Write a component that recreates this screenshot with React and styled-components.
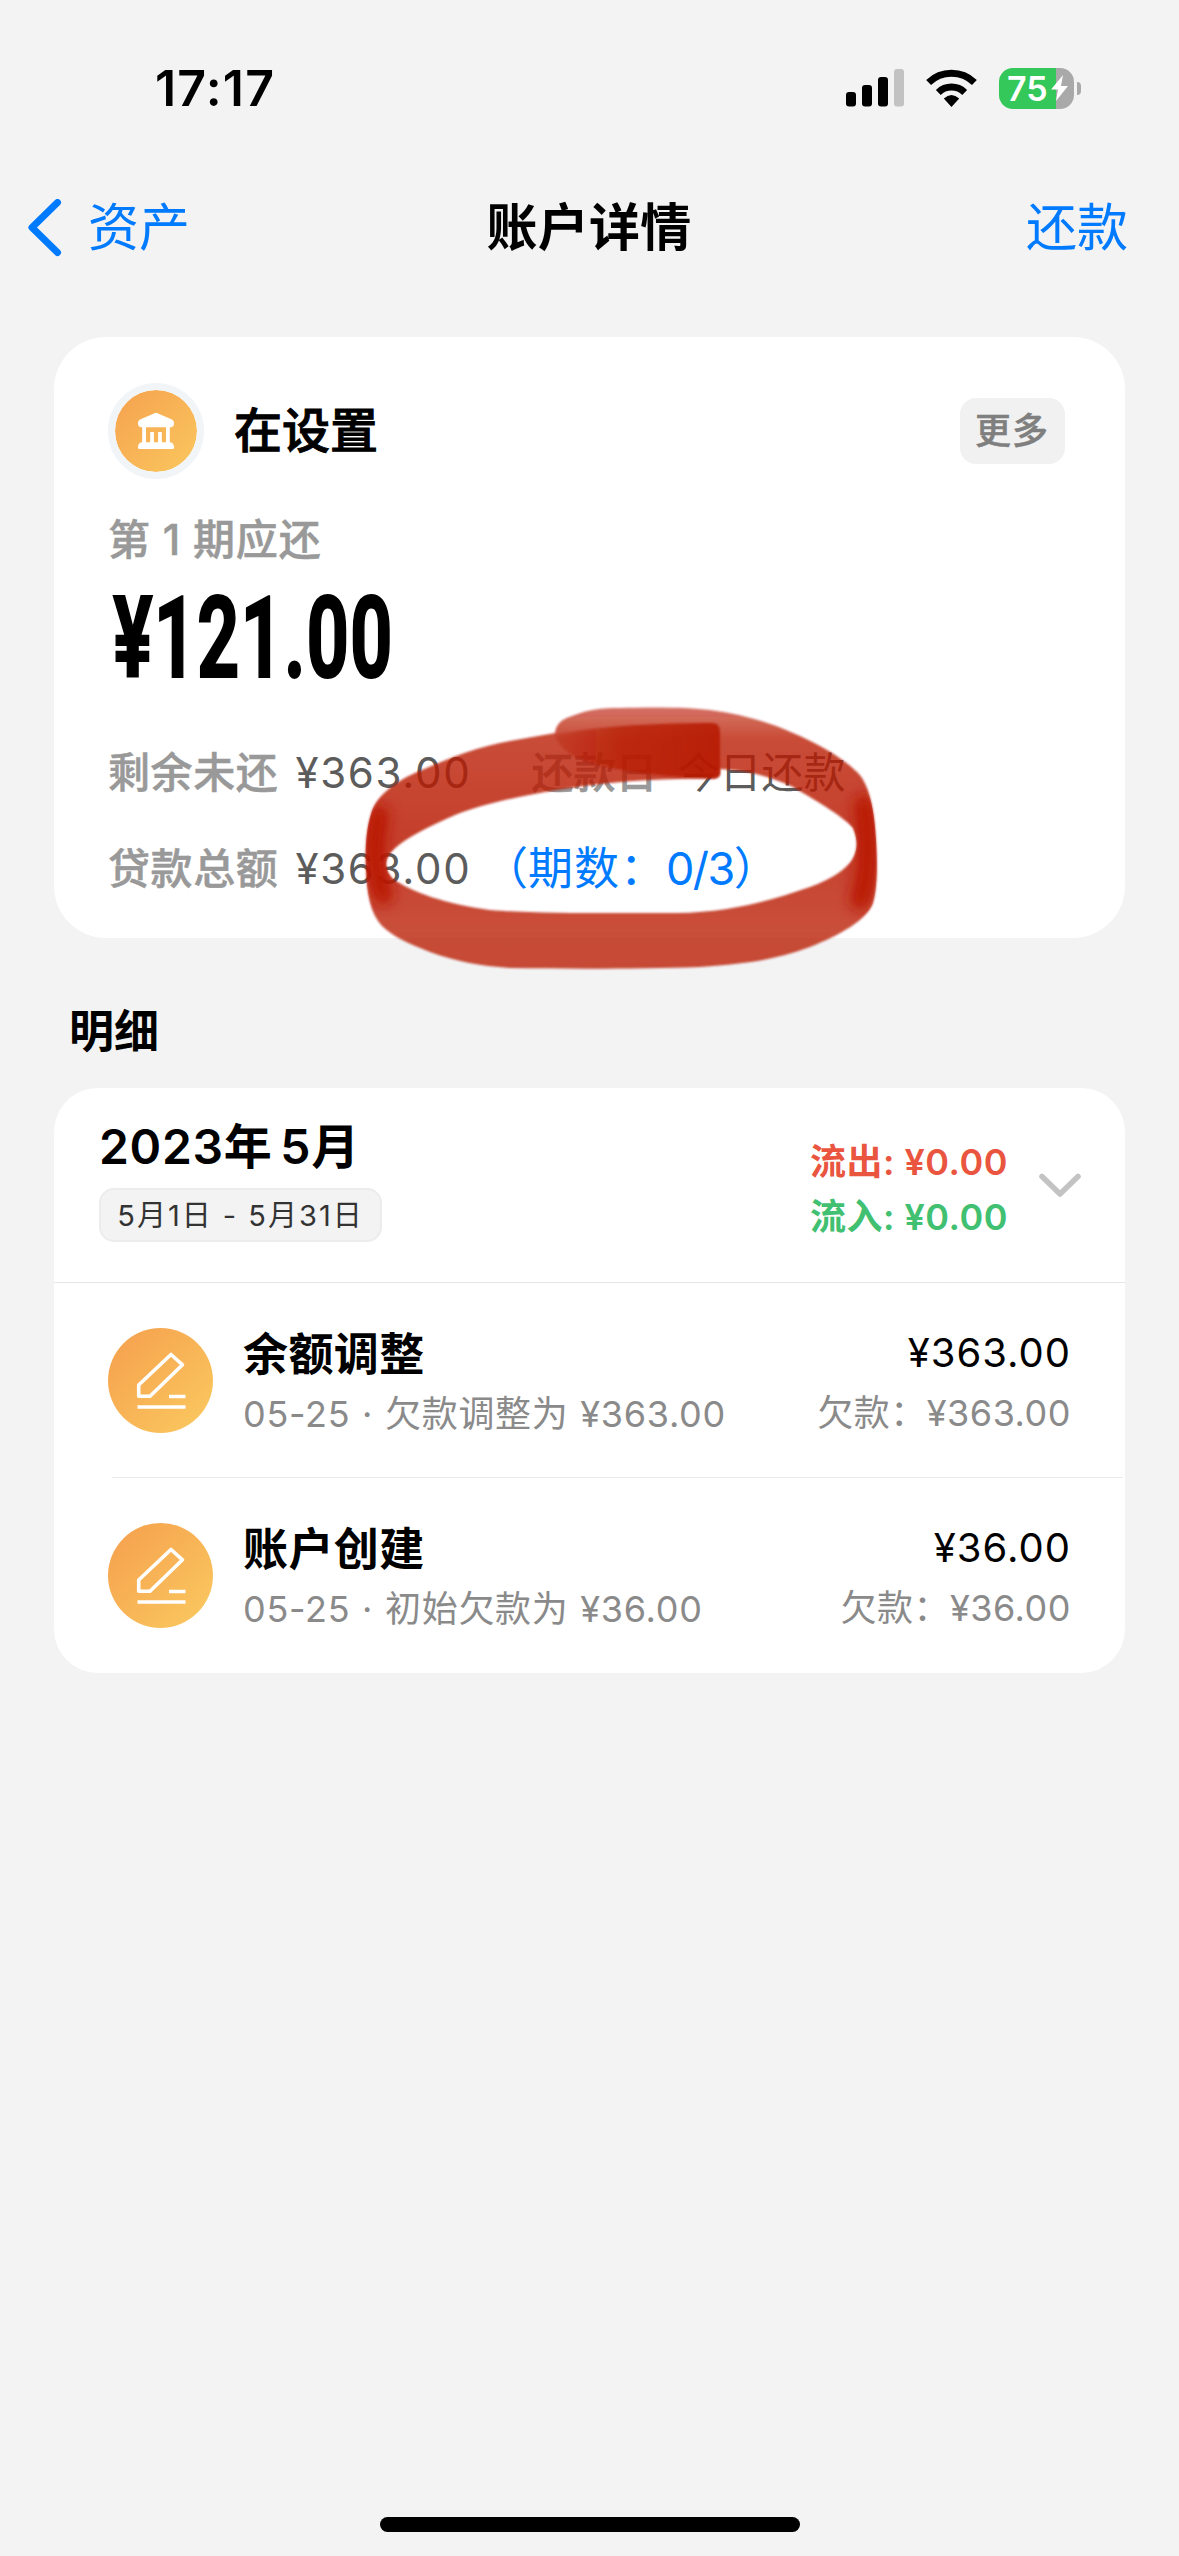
import React from "react";
import styled, { createGlobalStyle } from "styled-components";

const GlobalStyle = createGlobalStyle`
  * {
    box-sizing: border-box;
  }
  body {
    margin: 0;
    background-color: #f3f3f3;
    font-family: Inter, "Noto Sans CJK SC", sans-serif;
    color: #000;
  }
`;

const Screen = styled.div`
  width: 1179px;
  height: 2556px;
  position: relative;
  display: flex;
  flex-direction: column;
  overflow: hidden;
  white-space: nowrap;
`;

const StatusBar = styled.div`
  height: 176px;
  padding: 0 98px 0 155px;
  display: flex;
  align-items: center;
  justify-content: space-between;
`;

const Clock = styled.span`
  font-size: 50px;
  font-weight: 600;
  letter-spacing: 1.2px;
`;

const StatusIcons = styled.div`
  display: flex;
  align-items: center;
`;

const SignalIcon = styled.svg`
  margin-right: 22px;
`;

const WifiIcon = styled.svg`
  margin-right: 22px;
`;

const Battery = styled.div`
  width: 75px;
  height: 41px;
  border-radius: 14px;
  padding: 0 6px 0 8px;
  display: flex;
  align-items: center;
  justify-content: space-between;
  background: linear-gradient(to right, #34c759 57px, #a9a9a9 57px);
  color: #fff;
  font-size: 34px;
  font-weight: 600;
`;

const BatteryTip = styled.div`
  width: 4px;
  height: 13px;
  margin-left: 3px;
  border-radius: 0 5px 5px 0;
  background-color: #a9a9a9;
`;

const NavBar = styled.div`
  height: 101px;
  padding: 2px 51px 0 27px;
  display: grid;
  grid-template-columns: 1fr auto 1fr;
  align-items: center;
  font-size: 51px;
  line-height: 60px;
`;

const NavLink = styled.a`
  display: flex;
  align-items: center;
  gap: 26px;
  color: #007aff;
  justify-self: ${(props) => props.$side};
`;

const NavTitle = styled.h1`
  margin: 0 0 0 23px;
  font-size: 51px;
  font-weight: 600;
  letter-spacing: 0.3px;
`;

const Card = styled.section`
  margin: 0 54px;
  background-color: #fff;
  border-radius: ${(props) => props.$radius}px;
`;

const AccountCard = styled(Card)`
  height: 601px;
  margin-top: 60px;
  padding: 46px 60px 0 54px;
`;

const AccountHeader = styled.div`
  height: 96px;
  display: flex;
  align-items: center;
`;

const Circle = styled.div`
  flex: none;
  width: ${(props) => props.$size}px;
  height: ${(props) => props.$size}px;
  border: ${(props) => props.$ring || 0}px solid #f2f5f8;
  border-radius: 50%;
  display: flex;
  align-items: center;
  justify-content: center;
  background: linear-gradient(135deg, #f6a550 15%, #fac65e 90%) border-box;
  background-clip: ${(props) => (props.$ring ? "padding-box" : "border-box")};
`;

const AccountName = styled.h2`
  flex: 1;
  margin: 0 0 0 30px;
  font-size: 48px;
  line-height: 60px;
  font-weight: 500;
  -webkit-text-stroke: 1px currentColor;
`;

const MoreButton = styled.button`
  width: 105px;
  height: 66px;
  border: 0;
  border-radius: 16px;
  padding: 0 1px 1px 0;
  background-color: #f1f1f1;
  color: #7f7f7f;
  font-family: inherit;
  font-size: 36px;
  line-height: 60px;
  font-weight: 500;
  letter-spacing: 1px;
  -webkit-text-stroke: 0.5px currentColor;
`;

const PeriodLabel = styled.p`
  margin: 31px 0 0;
  font-size: 42px;
  line-height: 60px;
  font-weight: 500;
  letter-spacing: 0.8px;
  color: #999;
  -webkit-text-stroke: 0.5px currentColor;
`;

const DueAmount = styled.p`
  width: max-content;
  margin: 14px 0 0 5px;
  font-family: Roboto, sans-serif;
  font-size: 113px;
  line-height: 110px;
  font-weight: 700;
  letter-spacing: 1.5px;
  transform: scaleX(0.655);
  transform-origin: left center;
  -webkit-text-stroke: 2px #000;
`;

const Facts = styled.div`
  margin-top: 49px;
  display: grid;
  gap: 36px;
`;

const FactRow = styled.div`
  display: flex;
  align-items: center;
  height: 60px;
  line-height: 60px;
  font-size: 42px;
`;

const FactLabel = styled.span`
  color: #999;
  font-weight: 500;
  letter-spacing: ${(props) => props.$spacing || 0}px;
  margin-left: ${(props) => props.$gap || 0}px;
  -webkit-text-stroke: 0.5px currentColor;
`;

const FactValue = styled.span`
  color: #5c5c5c;
  letter-spacing: ${(props) => props.$spacing || 0}px;
  margin-left: ${(props) => props.$gap}px;
`;

const Terms = styled.span`
  font-size: 45px;
  letter-spacing: 1px;
  color: #007aff;
  margin-left: 34px;
`;

const Paren = styled.span`
  letter-spacing: 0;
  font-feature-settings: "halt";
`;

const Count = styled.span`
  letter-spacing: -1.5px;
`;

const SectionTitle = styled.h3`
  margin: 64px 0 26px 69px;
  font-size: 45px;
  line-height: 60px;
  font-weight: 600;
`;

const MonthHeader = styled.div`
  height: 195px;
  padding: 29px 43px 0 45px;
  display: flex;
  align-items: flex-start;
  border-bottom: 1px solid #e6e6e6;
`;

const MonthTitle = styled.div`
  font-size: 48px;
  line-height: 60px;
  font-weight: 600;
  letter-spacing: 0.7px;
  word-spacing: -5px;
`;

const MonthInfo = styled.div`
  flex: 1;
`;

const DateRange = styled.div`
  width: 283px;
  height: 54px;
  margin-top: 11px;
  border: 2px solid #ececec;
  border-radius: 15px;
  background-color: #f3f3f3;
  color: #333;
  font-size: 29px;
  line-height: 52px;
  letter-spacing: 2px;
  text-align: center;
`;

const Flows = styled.div`
  margin: 18px 30px 0 0;
`;

const Flow = styled.div`
  font-size: 36px;
  line-height: 55px;
  font-weight: 600;
  letter-spacing: 0.5px;
  color: ${(props) => props.$color};
`;

const ChevronDown = styled.svg`
  margin-top: 55px;
`;

const Entry = styled.div`
  height: 195px;
  padding: 41px 54px 0 54px;
  display: flex;
  align-items: flex-start;
`;

const EntryDivider = styled.div`
  height: 1px;
  margin: -1px 2px 0 58px;
  background-color: #ebebeb;
`;

const EntryIcon = styled(Circle)`
  margin-top: 4px;
`;

const EntryText = styled.div`
  flex: 1;
  margin: 1px 0 0 30px;
`;

const EntryTitle = styled.div`
  font-size: 45px;
  line-height: 60px;
  font-weight: 600;
  letter-spacing: 0.4px;
`;

const EntryAmount = styled.div`
  font-size: 40px;
  line-height: 57px;
  letter-spacing: 1px;
  text-align: right;
`;

const EntryNote = styled.div`
  font-size: 36px;
  line-height: ${(props) => props.$line}px;
  letter-spacing: ${(props) => props.$spacing}px;
  word-spacing: 1px;
  text-align: ${(props) => props.$align || "left"};
  color: #8a8a8a;
`;

const Marker = styled.svg`
  position: absolute;
  left: 350px;
  top: 690px;
  pointer-events: none;
`;

const HomeIndicator = styled.div`
  width: 420px;
  height: 15px;
  margin: auto auto 24px;
  border-radius: 8px;
  background-color: #000;
`;

const entries = [
  {
    title: "余额调整",
    note: "05-25 · 欠款调整为 ¥363.00",
    amount: "¥363.00",
  },
  {
    title: "账户创建",
    note: "05-25 · 初始欠款为 ¥36.00",
    amount: "¥36.00",
  },
];

function Signal() {
  return (
    <SignalIcon width="58" height="38" viewBox="0 0 58 38">
      <rect x="0" y="23" width="10" height="14.5" rx="3" />
      <rect x="16" y="16" width="10" height="21.5" rx="3" />
      <rect x="32" y="8" width="10" height="29.5" rx="3" />
      <rect x="48" y="0" width="10" height="37.5" rx="3" fill="#c2c2c2" />
    </SignalIcon>
  );
}

function Wifi() {
  return (
    <WifiIcon width="51" height="38" viewBox="0 0 51 38">
      <path d="M25.5 38 L17.8 29.6 Q25.5 22.6 33.2 29.6 Z" />
      <path d="M12.3 23.4 A19 19 0 0 1 38.7 23.4" fill="none" stroke="#000" strokeWidth="7" />
      <path d="M2.6 13.4 A33 33 0 0 1 48.4 13.4" fill="none" stroke="#000" strokeWidth="7" />
    </WifiIcon>
  );
}

function Bolt() {
  return (
    <svg width="17" height="26" viewBox="0 0 17 26">
      <path d="M12 0 L0 14.5 H7 L5 26 L17 11 H10 Z" fill="#fff" />
    </svg>
  );
}

function Bank() {
  return (
    <svg width="38" height="38" viewBox="0 0 38 38" fill="#fff">
      <path d="M17 1.4 Q19 .2 21 1.4 L35 7.4 Q37 8.6 37 11 Q37 15.3 33.5 15.3 H4.5 Q1 15.3 1 11 Q1 8.6 3 7.4 Z" />
      <rect x="5.2" y="14" width="3.8" height="18" />
      <rect x="29" y="14" width="3.8" height="18" />
      <rect x="13.2" y="20" width="3.7" height="12" />
      <rect x="21.1" y="20" width="3.7" height="12" />
      <path d="M5 30.2 H33 Q37 30.5 37 35.5 Q37 37 35.5 37 H2.5 Q1 37 1 35.5 Q1 30.5 5 30.2 Z" />
    </svg>
  );
}

function Pen() {
  return (
    <svg width="50" height="58" viewBox="0 0 50 58" fill="none" stroke="#fff" strokeWidth="3.6">
      <path d="M2.7 44.3 V33 L35 2.5 L46.5 12.8 L14 44.3 Z" strokeLinejoin="round" />
      <path d="M33 44.5 H49.5 M1.5 55 H49.5" />
    </svg>
  );
}

const LOOP = `
  M555 733 C556 724 562 719 572 716 C590 709 600 708 620 708 C650 707 690 707 710 710
  C740 714 770 722 793 733 C815 742 842 757 858 773 C870 785 875 815 876 840
  C877 860 878 885 873 903 C867 920 840 935 810 947 C775 960 745 964 700 967
  C640 969 570 969 510 968 C480 966 455 961 430 952 C410 944 395 938 382 926
  C370 913 367 893 366 870 C365 850 366 830 371 814 C376 796 395 782 415 773
  C440 762 475 747 510 741 Z
  M720 769 V774 Q719 779 712 779 C660 778 610 782 570 788 C530 794 485 803 455 815
  C425 828 398 842 389 855 C384 863 386 872 393 879 C412 892 445 904 490 910
  C540 914 620 913 677 913 C730 912 770 901 810 887 C832 879 845 870 852 860
  C858 850 858 840 853 828 C845 818 820 803 793 787 C770 776 745 770 720 769 Z`;

// hand drawn loop over the account card
function RedLoop() {
  return (
    <Marker width="540" height="290" viewBox="350 690 540 290">
      <defs>
        <filter id="soft" x="-5%" y="-5%" width="110%" height="110%">
          <feGaussianBlur stdDeviation="1.2" />
        </filter>
        <filter id="softer" filterUnits="userSpaceOnUse" x="350" y="690" width="540" height="290">
          <feGaussianBlur stdDeviation="7" />
        </filter>
        <linearGradient id="body" x1="0" y1="0" x2="0" y2="1">
          <stop offset="0" stopColor="#b91800" stopOpacity=".6" />
          <stop offset=".12" stopColor="#b91800" stopOpacity=".78" />
          <stop offset=".5" stopColor="#b91800" stopOpacity=".83" />
          <stop offset=".85" stopColor="#b91800" stopOpacity=".77" />
          <stop offset="1" stopColor="#b91800" stopOpacity=".78" />
        </linearGradient>
        <linearGradient id="overlap" x1="0" y1="0" x2="1" y2="0">
          <stop offset="0" stopColor="#b71a00" stopOpacity=".3" />
          <stop offset=".4" stopColor="#b71a00" stopOpacity=".72" />
          <stop offset="1" stopColor="#b71a00" stopOpacity=".86" />
        </linearGradient>
        <clipPath id="ring">
          <path clipRule="evenodd" d={LOOP} />
        </clipPath>
      </defs>
      <path d={LOOP} fill="url(#body)" fillRule="evenodd" filter="url(#soft)" />
      <path
        d="M555 735 C590 727 650 723 712 723 Q720 723 720 732 V774 Q719 778 712 778 C685 777 660 776 635 772 C595 766 562 758 555 735 Z"
        fill="url(#overlap)"
        filter="url(#soft)"
      />
      <g clipPath="url(#ring)" fill="none" stroke="#b91800" strokeWidth="20" strokeLinecap="round">
        <path d="M379 815 C373 840 373 870 383 895" filter="url(#softer)" />
        <path d="M864 805 C870 845 869 875 860 900" filter="url(#softer)" />
      </g>
    </Marker>
  );
}

export default function App() {
  return (
    <>
      <GlobalStyle />
      <Screen>
        <StatusBar>
          <Clock>17:17</Clock>
          <StatusIcons>
            <Signal />
            <Wifi />
            <Battery>
              75
              <Bolt />
            </Battery>
            <BatteryTip />
          </StatusIcons>
        </StatusBar>

        <NavBar>
          <NavLink $side="start">
            <svg width="35" height="58" viewBox="0 0 35 58" fill="none" stroke="#007aff" strokeWidth="7" strokeLinecap="round" strokeLinejoin="round">
              <path d="M30.5 3.5 L5 28.5 L30.5 53.5" />
            </svg>
            资产
          </NavLink>
          <NavTitle>账户详情</NavTitle>
          <NavLink $side="end">还款</NavLink>
        </NavBar>

        <AccountCard $radius={52}>
          <AccountHeader>
            <Circle $size={96} $ring={7}>
              <Bank />
            </Circle>
            <AccountName>在设置</AccountName>
            <MoreButton>更多</MoreButton>
          </AccountHeader>
          <PeriodLabel>第 1 期应还</PeriodLabel>
          <DueAmount>¥121.00</DueAmount>
          <Facts>
            <FactRow>
              <FactLabel $spacing={0.6}>剩余未还</FactLabel>
              <FactValue $gap={17} $spacing={1.7}>¥363.00</FactValue>
              <FactLabel $gap={60}>还款日</FactLabel>
              <FactValue $gap={20}>今日还款</FactValue>
            </FactRow>
            <FactRow>
              <FactLabel $spacing={0.6}>贷款总额</FactLabel>
              <FactValue $gap={17} $spacing={1.7}>¥363.00</FactValue>
              <Terms>
                <Paren>（</Paren>期数：<Count>0/3</Count><Paren>）</Paren>
              </Terms>
            </FactRow>
          </Facts>
        </AccountCard>

        <SectionTitle>明细</SectionTitle>

        <Card $radius={44}>
          <MonthHeader>
            <MonthInfo>
              <MonthTitle>2023年 5月</MonthTitle>
              <DateRange>5月1日 - 5月31日</DateRange>
            </MonthInfo>
            <Flows>
              <Flow $color="#ea5540">流出: ¥0.00</Flow>
              <Flow $color="#40c070">流入: ¥0.00</Flow>
            </Flows>
            <ChevronDown width="44" height="28" viewBox="0 0 44 28" fill="none" stroke="#c3c3c3" strokeWidth="5.5" strokeLinecap="round" strokeLinejoin="round">
              <path d="M4 4.5 L22 22 L40 4.5" />
            </ChevronDown>
          </MonthHeader>
          {entries.map((entry, index) => (
            <React.Fragment key={entry.title}>
              {index > 0 && <EntryDivider />}
              <Entry>
                <EntryIcon $size={105}>
                  <Pen />
                </EntryIcon>
                <EntryText>
                  <EntryTitle>{entry.title}</EntryTitle>
                  <EntryNote $line={58} $spacing={0.7}>{entry.note}</EntryNote>
                </EntryText>
                <div>
                  <EntryAmount>{entry.amount}</EntryAmount>
                  <EntryNote $line={64} $spacing={0.5} $align="right">
                    欠款：{entry.amount}
                  </EntryNote>
                </div>
              </Entry>
            </React.Fragment>
          ))}
        </Card>

        <HomeIndicator />
        <RedLoop />
      </Screen>
    </>
  );
}
